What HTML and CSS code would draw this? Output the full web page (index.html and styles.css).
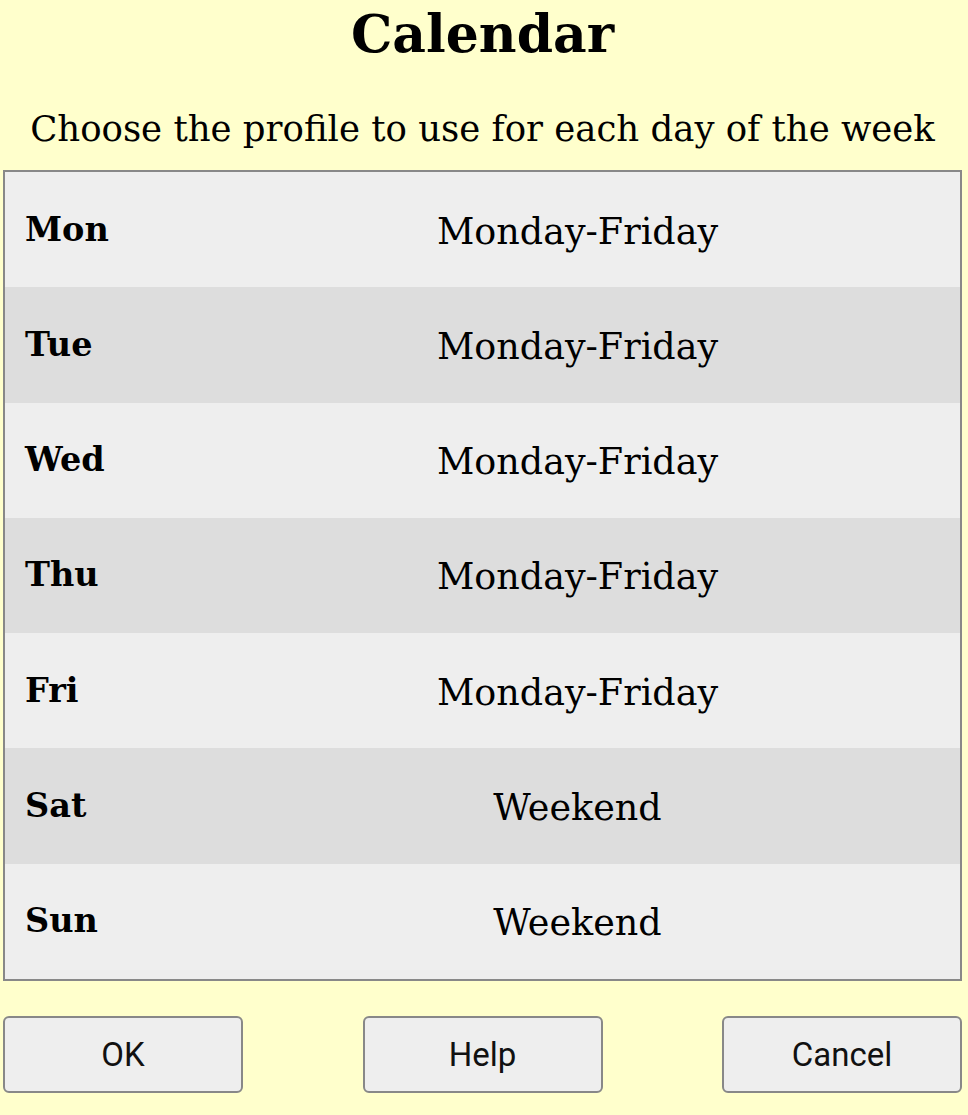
FILE: index.html
```html
<!DOCTYPE html>
<html lang="en">
<head>
<meta charset="utf-8">
<title>Calendar</title>
<link rel="stylesheet" href="styles.css">
</head>
<body>
<div class="dialog">
  <h1 class="title">Calendar</h1>
  <p class="subtitle">Choose the profile to use for each day of the week</p>
  <div class="table">
    <div class="row light"><div class="day">Mon</div><div class="profile">Monday-Friday</div></div>
    <div class="row dark"><div class="day">Tue</div><div class="profile">Monday-Friday</div></div>
    <div class="row light"><div class="day">Wed</div><div class="profile">Monday-Friday</div></div>
    <div class="row dark"><div class="day">Thu</div><div class="profile">Monday-Friday</div></div>
    <div class="row light"><div class="day">Fri</div><div class="profile">Monday-Friday</div></div>
    <div class="row dark"><div class="day">Sat</div><div class="profile">Weekend</div></div>
    <div class="row light"><div class="day">Sun</div><div class="profile">Weekend</div></div>
  </div>
  <div class="buttons">
    <button class="btn">OK</button>
    <button class="btn">Help</button>
    <button class="btn">Cancel</button>
  </div>
</div>
</body>
</html>
```
FILE: styles.css
```css
html, body {
  margin: 0;
  padding: 0;
  background: #ffffcc;
}
body {
  width: 968px;
  height: 1115px;
  overflow: hidden;
  font-family: "DejaVu Serif", "Liberation Serif", serif;
  color: #000;
}
.dialog {
  display: flex;
  flex-direction: column;
  padding: 3px 6px 0 3px;
}
.title {
  margin: 0;
  font-size: 52px;
  line-height: 62px;
  font-weight: bold;
  text-align: center;
}
.subtitle {
  margin: 44px 0 0 0;
  font-size: 35.5px;
  line-height: 40px;
  text-align: center;
  white-space: nowrap;
}
.table {
  margin-top: 21px;
  border: 2px solid #888;
  height: 807px;
  display: flex;
  flex-direction: column;
}
.row {
  flex: 1;
  display: grid;
  grid-template-columns: 190px 1fr;
  align-items: center;
}
.light { background: #eeeeee; }
.dark { background: #dddddd; }
.day {
  padding-left: 20px;
  font-weight: bold;
  font-size: 33.5px;
  line-height: 40px;
  margin-top: 0;
}
.profile {
  text-align: center;
  font-size: 36.5px;
  line-height: 40px;
  padding-top: 4px;
}
.buttons {
  margin-top: 35px;
  display: flex;
  justify-content: space-between;
}
.btn {
  width: 240px;
  height: 77px;
  box-sizing: border-box;
  border: 2px solid #888;
  border-radius: 6px;
  background: #eeeeee;
  font-family: Roboto, "Liberation Sans", sans-serif;
  font-size: 33px;
  color: #111;
  padding: 0;
}
```
